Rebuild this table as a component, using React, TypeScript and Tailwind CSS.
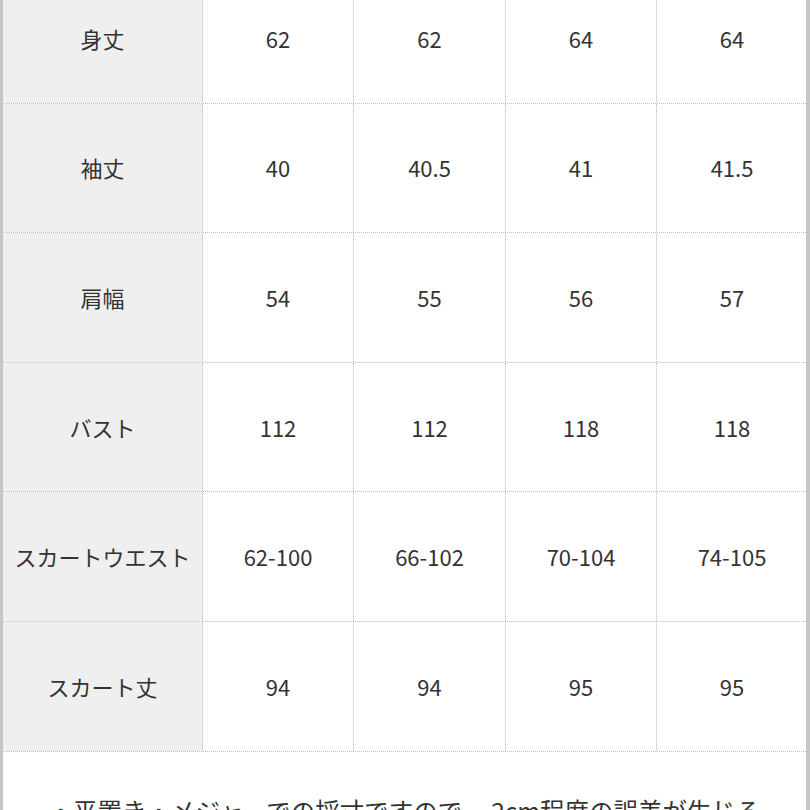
const rows: { label: string; values: string[] }[] = [
  { label: "身丈", values: ["62", "62", "64", "64"] },
  { label: "袖丈", values: ["40", "40.5", "41", "41.5"] },
  { label: "肩幅", values: ["54", "55", "56", "57"] },
  { label: "バスト", values: ["112", "112", "118", "118"] },
  { label: "スカートウエスト", values: ["62-100", "66-102", "70-104", "74-105"] },
  { label: "スカート丈", values: ["94", "94", "95", "95"] },
];

const widths = ["w-[151px]", "w-[152px]", "w-[151px]", "w-[150px]"];

export default function App() {
  return (
    <div
      className="h-[810px] w-[810px] overflow-hidden border-l-[3px] border-r-[4px] border-[#c6c6c6] bg-white text-[#333]"
      style={{ fontFamily: '"Noto Sans CJK JP", "Noto Sans", sans-serif' }}
    >
      <div className="-mt-[26px]">
        {rows.map((row) => (
          <div
            key={row.label}
            className="flex h-[129.6px] border-b border-dotted border-[#bdbdbd] text-[22px]"
          >
            <div className="flex w-[200px] shrink-0 items-center justify-center border-r border-dotted border-[#bdbdbd] bg-[#efefef] whitespace-nowrap">
              {row.label}
            </div>
            {row.values.map((v, i) => (
              <div
                key={i}
                className={`flex ${widths[i]} shrink-0 items-center justify-center ${
                  i < 3 ? "border-r border-dotted border-[#bdbdbd]" : ""
                }`}
              >
                {v}
              </div>
            ))}
          </div>
        ))}
        <div className="pt-[41px] text-center text-[24.5px] leading-[1.5] whitespace-nowrap">
          ・平置き・メジャーでの採寸ですので、 2cm程度の誤差が生じる
        </div>
      </div>
    </div>
  );
}
